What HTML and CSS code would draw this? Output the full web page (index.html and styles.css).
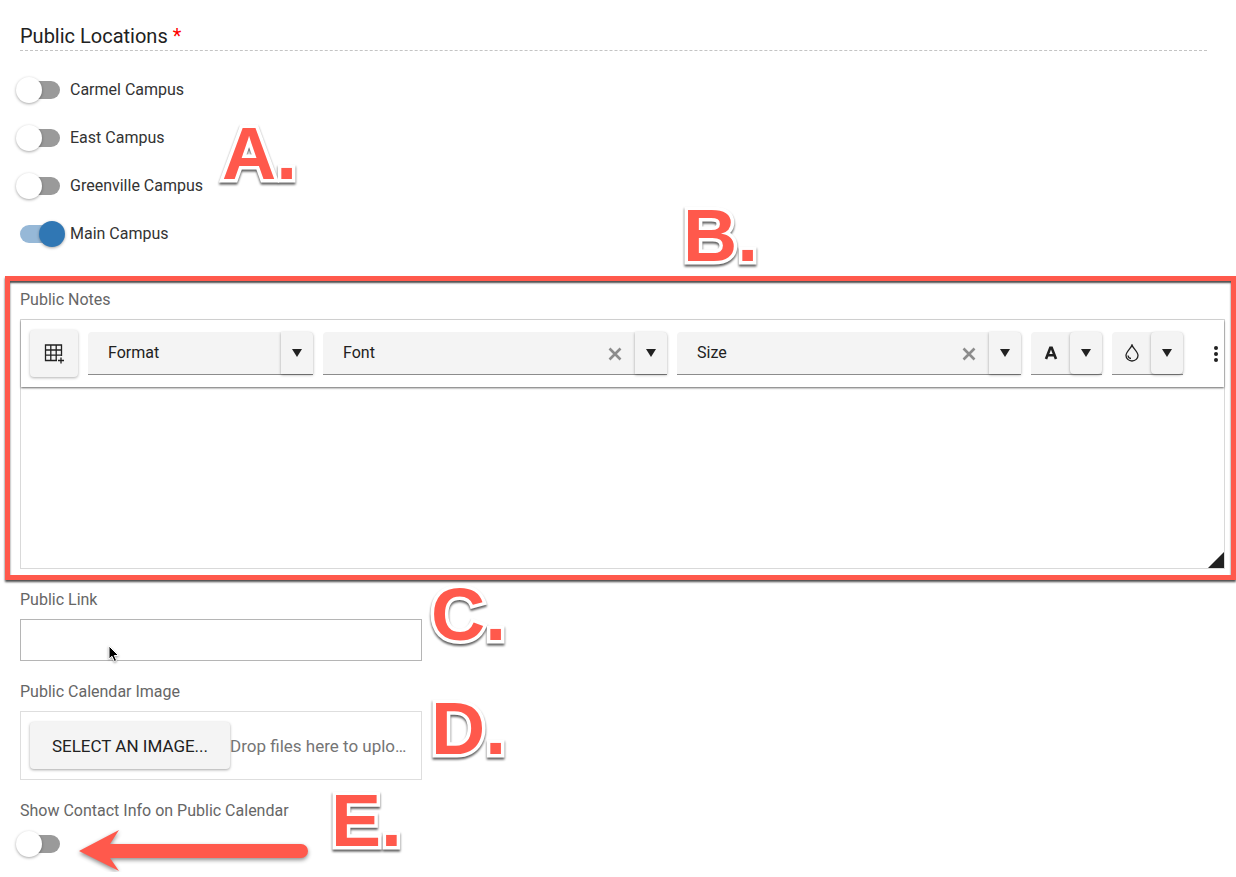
FILE: index.html
```html
<!DOCTYPE html>
<html lang="en">
<head>
<meta charset="UTF-8">
<meta name="viewport" content="width=device-width, initial-scale=1.0">
<title>Public Calendar</title>
<link rel="stylesheet" href="styles.css">
</head>
<body>

<form class="event-form">
  <section class="locations">
    <h2 class="section-title">Public Locations <span class="required">*</span></h2>
    <div class="switch-list">
      <label class="switch-row"><input type="checkbox" class="switch"> Carmel Campus</label>
      <label class="switch-row"><input type="checkbox" class="switch"> East Campus</label>
      <label class="switch-row"><input type="checkbox" class="switch"> Greenville Campus</label>
      <label class="switch-row"><input type="checkbox" class="switch" checked> Main Campus</label>
      <span class="marker marker-a">A.</span>
    </div>
  </section>

  <section class="notes">
    <label class="field-label" for="notes">Public Notes</label>
    <div class="editor">
      <div class="toolbar">
        <button type="button" class="tool-button" aria-label="Insert table">
          <svg width="20" height="20" viewBox="0 0 20 20" fill="none" stroke="#212121" stroke-width="1.3">
            <path d="M13 16.5H1.5V1H17.5V12M1.5 6H17.5M1.5 11.2H17.5M6.8 1V16.5M12.2 1V16.5M17 13.5V19.5M14 16.5H20"/>
          </svg>
        </button>
        <div class="combo combo-format">
          <select aria-label="Format"><option>Format</option></select>
          <span class="caret"></span>
        </div>
        <div class="combo">
          <select aria-label="Font"><option>Font</option></select>
          <button type="button" class="clear" aria-label="Clear font">
            <svg width="14" height="14" viewBox="0 0 14 14" stroke="#8c8c8c" stroke-width="2.6"><path d="M1.5 1.5L12.5 12.5M12.5 1.5L1.5 12.5"/></svg>
          </button>
          <span class="caret"></span>
        </div>
        <div class="combo">
          <select aria-label="Size"><option>Size</option></select>
          <button type="button" class="clear" aria-label="Clear size">
            <svg width="14" height="14" viewBox="0 0 14 14" stroke="#8c8c8c" stroke-width="2.6"><path d="M1.5 1.5L12.5 12.5M12.5 1.5L1.5 12.5"/></svg>
          </button>
          <span class="caret"></span>
        </div>
        <div class="color-picker">
          <button type="button" class="color-value" aria-label="Text color">
            <svg width="14" height="14" viewBox="0 0 14 14" fill="none" stroke="#212121" stroke-width="2.6"><path d="M2 13L6.3 1.8H7.7L12 13M3.8 9.2H10.2"/></svg>
          </button>
          <button type="button" class="color-caret" aria-label="Choose text color"></button>
        </div>
        <div class="color-picker">
          <button type="button" class="color-value" aria-label="Background color">
            <svg width="14" height="18" viewBox="0 0 14 18" fill="none" stroke="#212121" stroke-width="1.3"><path d="M7 1C6 4.500 1 7.500 1 11.500A6 5.500 0 0 0 13 11.500C13 7.500 8 4.500 7 1ZM3 11.500C3.300 13.500 4.500 14.500 6 14.500"/></svg>
          </button>
          <button type="button" class="color-caret" aria-label="Choose background color"></button>
        </div>
        <button type="button" class="more" aria-label="More tools">
          <svg width="4" height="18" viewBox="0 0 4 18" fill="#212121"><circle cx="2" cy="3" r="2"/><circle cx="2" cy="9" r="2"/><circle cx="2" cy="15" r="2"/></svg>
        </button>
      </div>
      <textarea id="notes"></textarea>
      <span class="resize-handle"></span>
    </div>
    <span class="marker marker-b">B.</span>
  </section>

  <div class="field">
    <label class="field-label" for="link">Public Link</label>
    <input type="text" id="link" class="text-input">
    <svg class="pointer" width="12" height="18" viewBox="0 0 12 18"><path d="M1 1V14L4 11.300L6.300 16.500L8.600 15.500L6.300 10.500H10.500Z" fill="#000" stroke="#fff"/></svg>
    <span class="marker marker-c">C.</span>
  </div>

  <div class="field">
    <span class="field-label">Public Calendar Image</span>
    <div class="upload">
      <button type="button" class="upload-button">SELECT AN IMAGE...</button>
      <span class="upload-hint">Drop files here to upload</span>
    </div>
    <span class="marker marker-d">D.</span>
  </div>

  <div class="field">
    <label class="field-label" for="contact">Show Contact Info on Public Calendar</label>
    <input type="checkbox" id="contact" class="switch">
    <svg class="arrow" width="230" height="42" viewBox="0 0 230 42"><path d="M0 21L40 0L31 14H222A7 7 0 0 1 222 28H31L40 41Z" fill="#ff594c"/></svg>
    <span class="marker marker-e">E.</span>
  </div>
</form>

</body>
</html>
```
FILE: styles.css
```css
* {
  box-sizing: border-box;
}

body {
  margin: 0;
  background: #fff;
  color: #212121;
  font-family: Roboto, Arial, sans-serif;
  font-size: 16px;
  line-height: 24px;
}

button,
input,
select,
textarea {
  margin: 0;
  font: inherit;
  color: inherit;
}

button {
  padding: 0;
  border: none;
  background: none;
  cursor: pointer;
}

svg {
  display: block;
}

.event-form {
  padding-top: 22px;
}

/* Locations */
.locations {
  margin: 0 29px 30px 20px;
}

.section-title {
  margin: 0 0 27px;
  border-bottom: 1px dashed #c4c4c4;
  font-size: 20px;
  font-weight: 400;
  line-height: 28px;
}

.required {
  color: #f00;
}

.switch-list {
  position: relative;
  display: flex;
  flex-direction: column;
  align-items: flex-start;
  gap: 24px;
}

.switch-row {
  display: flex;
  align-items: center;
  gap: 10px;
  color: #333;
}

.switch {
  appearance: none;
  position: relative;
  display: block;
  width: 40px;
  height: 18px;
  border-radius: 9px;
  background: #9a9a9a;
}

.switch::before {
  content: "";
  position: absolute;
  top: -4px;
  left: -4px;
  width: 26px;
  height: 26px;
  border-radius: 50%;
  background: #fff;
  box-shadow: 0 1px 3px rgba(0, 0, 0, 0.35);
}

.switch:checked {
  background: #96b8d7;
}

.switch:checked::before {
  left: 19px;
  background: #3077b4;
}

/* Notes */
.notes {
  position: relative;
  margin: 0 0 8px 5px;
  padding: 7px 6px 6px 10px;
  border: 5px solid #ff594c;
  box-shadow: 0 2px 2px rgba(0, 0, 0, 0.7), inset 0 2px 2px rgba(0, 0, 0, 0.7);
}

.field-label {
  display: block;
  margin-bottom: 7px;
  color: #666;
}

.editor {
  position: relative;
  border: 1px solid #d9d9d9;
}

.toolbar {
  display: flex;
  align-items: center;
  gap: 10px;
  height: 67px;
  padding-left: 9px;
  box-shadow: 0 1px 2px rgba(0, 0, 0, 0.6);
}

.tool-button {
  display: grid;
  place-items: center;
  width: 48px;
  height: 47px;
  border-radius: 4px;
  background: #f4f4f4;
  box-shadow: 0 1px 3px rgba(0, 0, 0, 0.3);
}

.combo {
  position: relative;
  flex: 1;
  height: 43px;
}

.combo-format {
  flex: 0 0 225px;
}

.combo select {
  appearance: none;
  width: 100%;
  height: 100%;
  padding: 0 70px 0 20px;
  border: none;
  border-bottom: 1px solid #8c8c8c;
  border-radius: 4px 4px 0 0;
  background: #f4f4f4;
}

.caret {
  position: absolute;
  top: 0;
  right: 0;
  display: grid;
  place-items: center;
  width: 32px;
  height: 42px;
  border-radius: 0 4px 0 0;
  background: #f4f4f4;
  box-shadow: 0 1px 3px rgba(0, 0, 0, 0.35);
  pointer-events: none;
}

.caret::before,
.color-caret::before {
  content: "";
  width: 10px;
  height: 8px;
  background: #212121;
  clip-path: polygon(0 0, 100% 0, 50% 100%);
}

.clear {
  position: absolute;
  top: 15px;
  right: 45px;
}

.color-picker {
  display: flex;
  width: 71px;
  height: 43px;
  border-bottom: 1px solid #8c8c8c;
  border-radius: 4px 4px 0 0;
  background: #f4f4f4;
}

.color-value,
.color-caret {
  display: grid;
  place-items: center;
}

.color-value {
  flex: 1;
}

.color-caret {
  width: 32px;
  border-radius: 4px;
  background: #f4f4f4;
  box-shadow: 0 1px 3px rgba(0, 0, 0, 0.35);
}

.more {
  display: grid;
  place-items: center;
  width: 17px;
  height: 43px;
  margin-left: 14px;
}

.editor textarea {
  display: block;
  width: 100%;
  height: 181px;
  padding: 16px;
  border: none;
  outline: none;
  background: transparent;
  resize: none;
}

.resize-handle {
  position: absolute;
  right: 0;
  bottom: 0;
  width: 16px;
  height: 16px;
  background: #212121;
  clip-path: polygon(100% 0, 100% 100%, 0 100%);
}

/* Fields below the editor */
.field {
  position: relative;
  max-width: 402px;
  margin: 0 0 19px 20px;
}

.text-input {
  display: block;
  width: 100%;
  height: 42px;
  padding: 0 10px;
  border: 1px solid #b5b5b5;
}

.upload {
  display: flex;
  align-items: center;
  padding: 10px 9px;
  border: 1px solid #dedede;
}

.upload-button {
  flex: none;
  min-width: 200px;
  height: 47px;
  padding: 0 20px;
  border-radius: 4px;
  background: #f4f4f4;
  box-shadow: 0 1px 3px rgba(0, 0, 0, 0.35);
  font-size: 17px;
}

.upload-hint {
  overflow: hidden;
  color: #757575;
  font-size: 17px;
  text-overflow: ellipsis;
  white-space: nowrap;
}

.field .switch {
  margin-top: 12px;
}

/* Callouts */
.marker {
  position: absolute;
  color: #ff594c;
  font: bold 75px/72px "Liberation Sans", Arial, sans-serif;
  -webkit-text-stroke: 7px #fff;
  paint-order: stroke fill;
  filter: drop-shadow(0 2px 1px rgba(0, 0, 0, 0.65));
  pointer-events: none;
}

.marker-a {
  top: 39px;
  left: 202px;
}

.marker-b {
  top: -82px;
  left: 673px;
}

.marker-c {
  top: -10px;
  left: 411px;
}

.marker-d {
  top: 12px;
  left: 411px;
}

.marker-e {
  top: -15px;
  left: 311px;
}

.pointer {
  position: absolute;
  top: 57px;
  left: 88px;
  filter: drop-shadow(0 1px 1px rgba(0, 0, 0, 0.4));
}

.arrow {
  position: absolute;
  top: 31px;
  left: 59px;
  filter: drop-shadow(0 2px 2px rgba(0, 0, 0, 0.45));
}
```
